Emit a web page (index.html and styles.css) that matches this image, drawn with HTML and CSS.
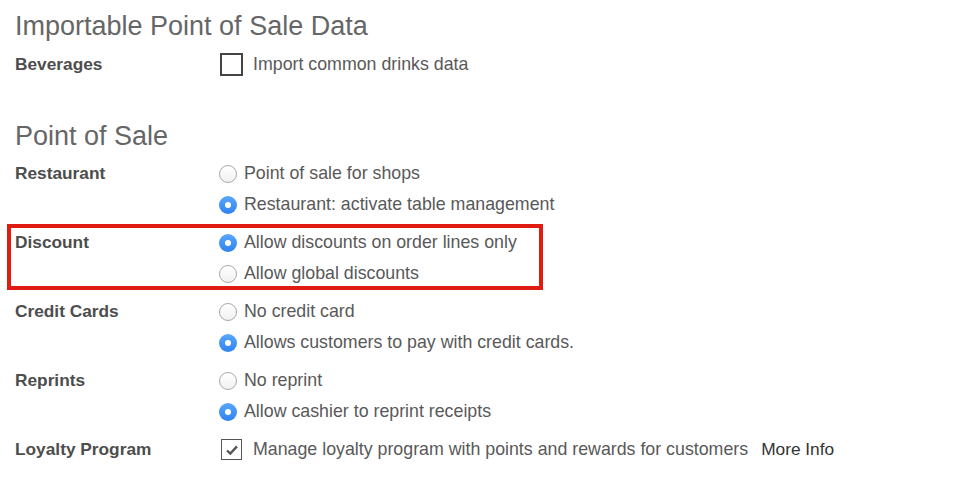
FILE: index.html
```html
<!DOCTYPE html>
<html>
<head>
<meta charset="utf-8">
<link rel="stylesheet" href="styles.css">
</head>
<body>
<div class="page">
  <h2 class="section-title">Importable Point of Sale Data</h2>
  <div class="row">
    <div class="label">Beverages</div>
    <div class="options">
      <div class="opt"><span class="checkbox big"></span><span class="txt cb-txt">Import common drinks data</span></div>
    </div>
  </div>

  <h2 class="section-title second">Point of Sale</h2>
  <div class="row first">
    <div class="label">Restaurant</div>
    <div class="options">
      <div class="opt"><span class="radio"></span><span class="txt">Point of sale for shops</span></div>
      <div class="opt"><span class="radio on"></span><span class="txt">Restaurant: activate table management</span></div>
    </div>
  </div>
  <div class="row highlight">
    <div class="label">Discount</div>
    <div class="options">
      <div class="opt"><span class="radio on"></span><span class="txt">Allow discounts on order lines only</span></div>
      <div class="opt"><span class="radio"></span><span class="txt">Allow global discounts</span></div>
    </div>
  </div>
  <div class="row">
    <div class="label">Credit Cards</div>
    <div class="options">
      <div class="opt"><span class="radio"></span><span class="txt">No credit card</span></div>
      <div class="opt"><span class="radio on"></span><span class="txt">Allows customers to pay with credit cards.</span></div>
    </div>
  </div>
  <div class="row">
    <div class="label">Reprints</div>
    <div class="options">
      <div class="opt"><span class="radio"></span><span class="txt">No reprint</span></div>
      <div class="opt"><span class="radio on"></span><span class="txt">Allow cashier to reprint receipts</span></div>
    </div>
  </div>
  <div class="row">
    <div class="label">Loyalty Program</div>
    <div class="options">
      <div class="opt"><span class="checkbox checked"><svg width="14" height="12" viewBox="0 0 14 12"><path d="M2 6.5 L5.3 9.6 L12 2.4" fill="none" stroke="#555" stroke-width="2.4" stroke-linejoin="miter"/></svg></span><span class="txt cb-txt">Manage loyalty program with points and rewards for customers</span><a class="more">More Info</a></div>
    </div>
  </div>
</div>
</body>
</html>
```

FILE: styles.css
```css
html, body {
  margin: 0;
  padding: 0;
  background: #ffffff;
}
body {
  font-family: "Liberation Sans", Arial, Helvetica, sans-serif;
  color: #555555;
}
.page {
  padding: 10px 15px 0 15px;
}
.section-title {
  margin: 0;
  font-size: 27px;
  font-weight: normal;
  line-height: 32px;
  height: 32px;
  color: #666666;
}
.section-title.second {
  margin-top: 40px;
}
.row {
  display: flex;
  margin-top: 7px;
}
.row.first {
  margin-top: 6px;
}
.label {
  width: 204px;
  flex: none;
  font-size: 17.3px;
  font-weight: bold;
  line-height: 31px;
  height: 31px;
  color: #4d4d4d;
}
.options {
  display: flex;
  flex-direction: column;
}
.opt {
  display: flex;
  align-items: center;
  height: 31px;
  font-size: 17.8px;
  color: #595959;
  white-space: nowrap;
}
.radio {
  flex: none;
  width: 18px;
  height: 18px;
  box-sizing: border-box;
  border-radius: 50%;
  border: 1px solid #a8a8a8;
  background: linear-gradient(#ffffff, #f1f1f1);
  margin-right: 7px;
  position: relative;
}
.radio.on {
  border: none;
  background: linear-gradient(#5aa6fb, #2f83f1);
}
.radio.on::after {
  content: "";
  position: absolute;
  left: 6px;
  top: 6px;
  width: 6px;
  height: 6px;
  border-radius: 50%;
  background: #ffffff;
}
.checkbox {
  flex: none;
  box-sizing: border-box;
  width: 22px;
  height: 22px;
  margin-left: 1px;
  margin-right: 11px;
  display: flex;
  align-items: center;
  justify-content: center;
}
.checkbox.big {
  border: 2.5px solid #444444;
  width: 23px;
  height: 23px;
  margin-left: 1px;
  margin-right: 10px;
}
.checkbox.checked {
  border: 1.5px solid #555555;
  width: 21px;
  height: 21px;
  margin-left: 2px;
  margin-right: 11px;
}
.more {
  margin-left: 13px;
  color: #333333;
  font-size: 17.3px;
}
.highlight {
  position: relative;
}
.highlight::after {
  content: "";
  position: absolute;
  left: -8px;
  top: -3.5px;
  width: 536px;
  height: 66px;
  box-sizing: border-box;
  border: 4px solid #e01b12;
  pointer-events: none;
}
```
